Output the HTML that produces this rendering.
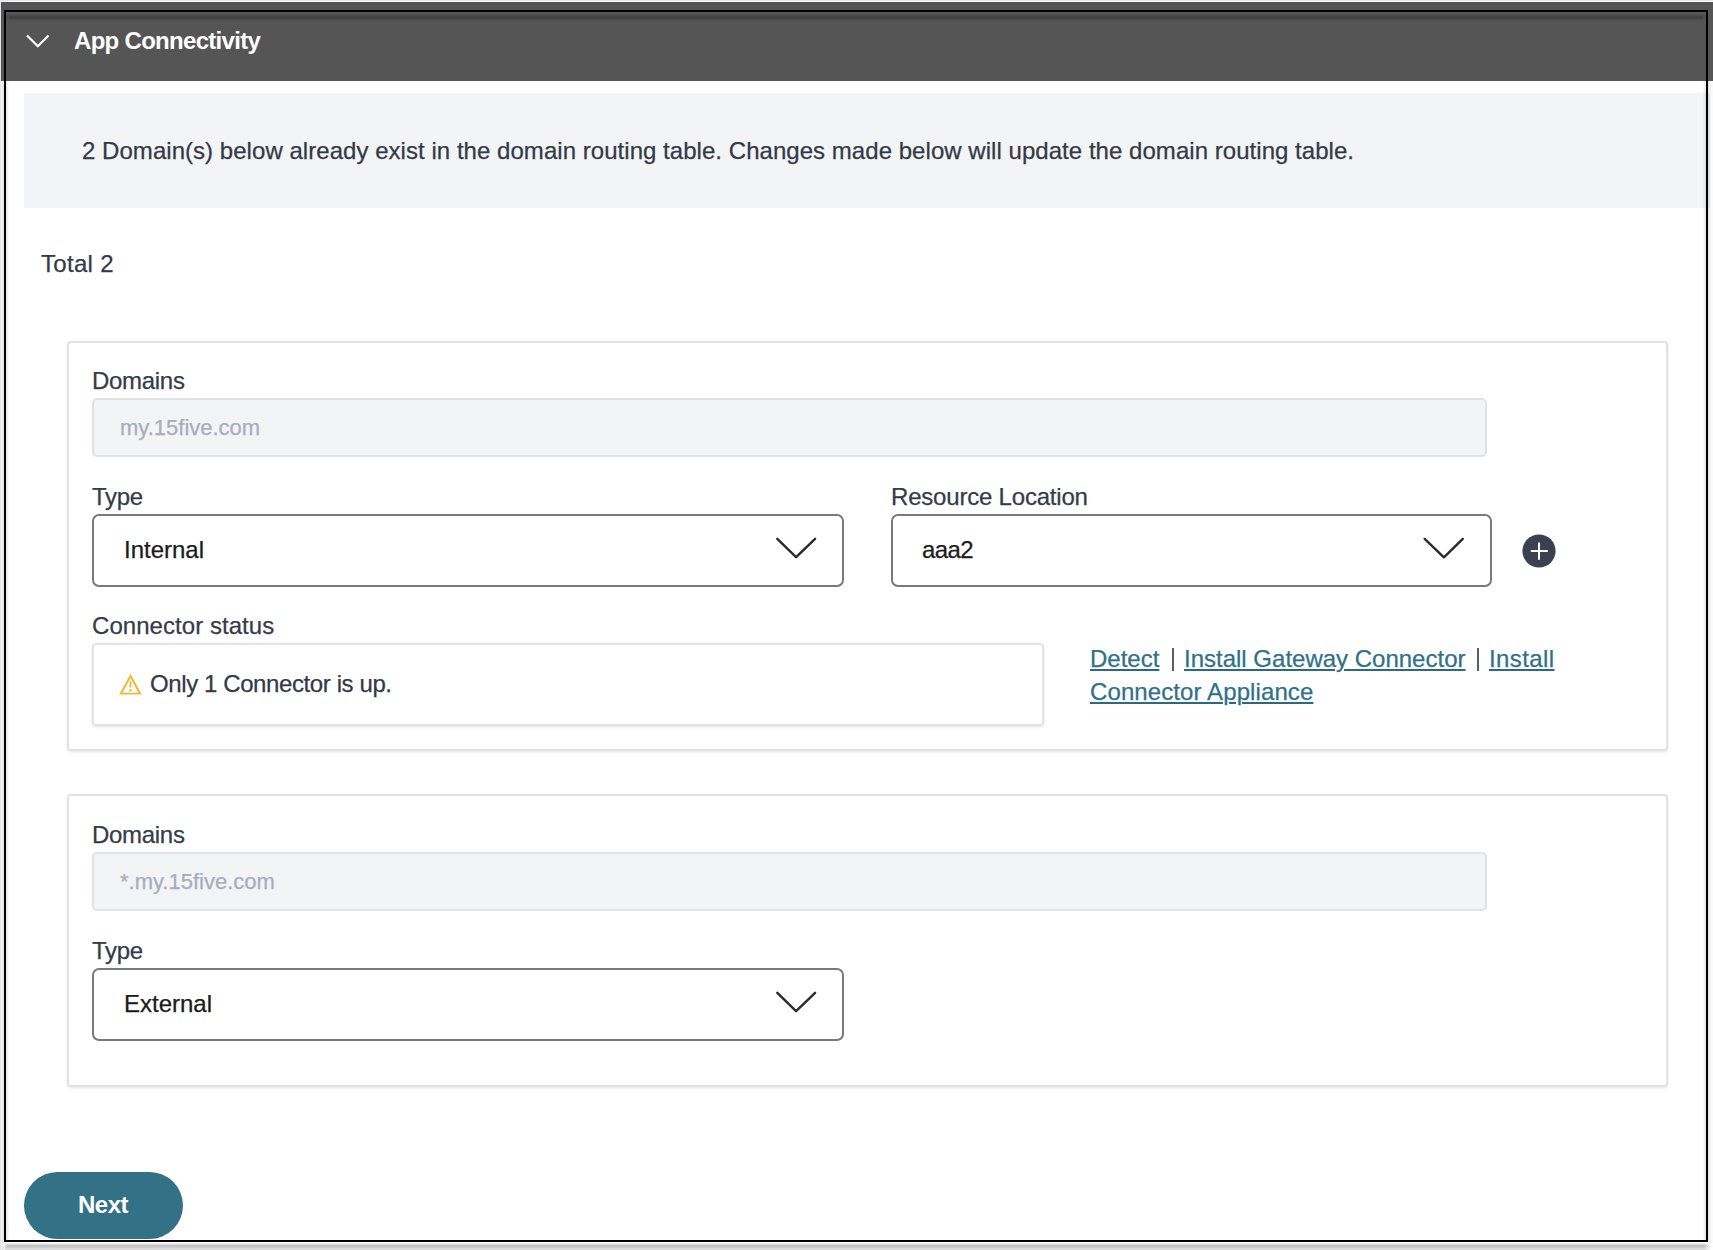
<!DOCTYPE html>
<html>
<head>
<meta charset="utf-8">
<style>
html,body{margin:0;padding:0;}
body{width:1713px;height:1250px;overflow:hidden;position:relative;background:#ffffff;font-family:"Liberation Sans",sans-serif;}
.abs{position:absolute;}
.t{position:absolute;white-space:nowrap;line-height:24px;font-size:24px;-webkit-text-stroke:0.25px currentColor;}
#header{left:1px;top:2px;width:1712px;height:79px;background:#555555;}
#frame{left:4px;top:10px;width:1700px;height:1228px;border:2px solid #000;}
#infobox{left:24px;top:93px;width:1686px;height:115px;background:#f3f4f6;}
.card{position:absolute;left:67px;width:1597px;border:2px solid #e1e2e4;border-radius:4px;background:#fff;box-shadow:0 1px 3px rgba(0,0,0,0.10);}
.inp{position:absolute;left:92px;width:1391px;height:55px;background:#f3f4f6;border:2px solid #e0e2e6;border-radius:5px;}
.sel{position:absolute;height:69px;border:2px solid #797979;border-radius:7px;background:#fff;}
.lbl{color:#343c49;letter-spacing:-0.3px;}
.ph{color:#a7aebb;font-size:22px;line-height:22px;}
.val{color:#1b1b1b;}
.dark{color:#323a47;}
.lnk{color:#2f7187;text-decoration:underline;text-decoration-color:#2a6a80;text-decoration-thickness:2px;text-underline-offset:2px;}
.pipe{position:absolute;width:2px;height:23px;background:#595e6a;top:648px;}
</style>
</head>
<body>
<div class="abs" style="left:0;top:0;width:1713px;height:1px;background:#e4e6ea;"></div>
<div class="abs" style="left:0;top:1px;width:1713px;height:1px;background:#f8f9fc;"></div>
<div id="header" class="abs"></div>
<div class="abs" style="left:0;top:2px;width:1px;height:1248px;background:#e2e4e8;"></div>

<!-- header chevron -->
<svg class="abs" style="left:20px;top:28px" width="40" height="30" viewBox="0 0 40 30">
  <polyline points="7,7.5 17.8,18.2 28.6,7.5" fill="none" stroke="#fff" stroke-width="2.2"/>
</svg>
<div class="t" style="left:74px;top:29px;font-weight:bold;color:#fff;letter-spacing:-0.7px;-webkit-text-stroke:0;">App Connectivity</div>

<div id="infobox" class="abs"></div>
<div class="t dark" style="left:82px;top:139px;letter-spacing:0.04px;">2 Domain(s) below already exist in the domain routing table. Changes made below will update the domain routing table.</div>

<div class="t dark" style="left:41px;top:252px;letter-spacing:0.3px;">Total 2</div>

<!-- card 1 -->
<div class="card" style="top:341px;height:406px;"></div>
<div class="t lbl" style="left:92px;top:369px;">Domains</div>
<div class="inp" style="top:398px;"></div>
<div class="t ph" style="left:120px;top:417px;">my.15five.com</div>

<div class="t lbl" style="left:92px;top:485px;">Type</div>
<div class="sel" style="left:92px;top:514px;width:748px;"></div>
<div class="t val" style="left:124px;top:538px;">Internal</div>
<svg class="abs" style="left:770px;top:530px" width="52" height="36" viewBox="0 0 52 36">
  <polyline points="7.3,8.8 26.1,27.2 45.1,8.8" fill="none" stroke="#2b2b2b" stroke-width="2.4" stroke-linecap="round" stroke-linejoin="round"/>
</svg>

<div class="t lbl" style="left:891px;top:485px;letter-spacing:-0.2px;">Resource Location</div>
<div class="sel" style="left:891px;top:514px;width:597px;"></div>
<div class="t val" style="left:922px;top:538px;letter-spacing:-0.6px;">aaa2</div>
<svg class="abs" style="left:1418px;top:530px" width="52" height="36" viewBox="0 0 52 36">
  <polyline points="6.7,8.9 25.9,27.3 44.8,8.9" fill="none" stroke="#2b2b2b" stroke-width="2.4" stroke-linecap="round" stroke-linejoin="round"/>
</svg>
<svg class="abs" style="left:1522px;top:534px" width="34" height="34" viewBox="0 0 34 34">
  <circle cx="17" cy="17" r="16.6" fill="#3b4150"/>
  <line x1="8.8" y1="17" x2="25.8" y2="17" stroke="#fff" stroke-width="2"/>
  <line x1="17" y1="8.6" x2="17" y2="25.8" stroke="#fff" stroke-width="2"/>
</svg>

<div class="t lbl" style="left:92px;top:614px;letter-spacing:0.05px;">Connector status</div>
<div class="abs" style="left:92px;top:643px;width:948px;height:79px;border:2px solid #e2e3e5;border-radius:4px;box-shadow:0 1px 3px rgba(0,0,0,0.12);"></div>
<svg class="abs" style="left:110px;top:665px" width="40" height="35" viewBox="0 0 40 35">
  <path d="M20.5,8.7 L9.2,29.4 L31.8,29.4 Z M20.5,12.9 L12.6,27.7 L28.3,27.7 Z" fill="#f1bb37" fill-rule="evenodd"/>
  <rect x="19.5" y="16.2" width="2" height="6.4" rx="0.8" fill="#f1bb37"/>
  <circle cx="20.5" cy="25.3" r="1.25" fill="#f1bb37"/>
</svg>
<div class="t dark" style="left:150px;top:672px;letter-spacing:-0.4px;">Only 1 Connector is up.</div>

<div class="t" style="left:1090px;top:647px;"><span class="lnk">Detect</span></div>
<div class="pipe" style="left:1172px;"></div>
<div class="t" style="left:1184px;top:647px;"><span class="lnk">Install Gateway Connector</span></div>
<div class="pipe" style="left:1477px;"></div>
<div class="t" style="left:1489px;top:647px;letter-spacing:0.4px;"><span class="lnk">Install</span></div>
<div class="t" style="left:1090px;top:680px;letter-spacing:0.1px;"><span class="lnk">Connector Appliance</span></div>

<!-- card 2 -->
<div class="card" style="top:794px;height:289px;"></div>
<div class="t lbl" style="left:92px;top:823px;">Domains</div>
<div class="inp" style="top:852px;"></div>
<div class="t ph" style="left:120px;top:871px;">*.my.15five.com</div>

<div class="t lbl" style="left:92px;top:939px;">Type</div>
<div class="sel" style="left:92px;top:968px;width:748px;"></div>
<div class="t val" style="left:124px;top:992px;">External</div>
<svg class="abs" style="left:770px;top:984px" width="52" height="36" viewBox="0 0 52 36">
  <polyline points="7.3,8.8 26.1,27.2 45.1,8.8" fill="none" stroke="#2b2b2b" stroke-width="2.4" stroke-linecap="round" stroke-linejoin="round"/>
</svg>

<!-- next button -->
<div class="abs" style="left:24px;top:1172px;width:159px;height:67px;border-radius:34px;background:#327186;"></div>
<div class="t" style="left:78px;top:1193px;font-weight:bold;color:#fff;letter-spacing:-0.5px;-webkit-text-stroke:0;">Next</div>

<!-- frame shadows -->
<div class="abs" style="left:6px;top:12px;width:1700px;height:10px;-webkit-mask-image:linear-gradient(to right,transparent 0,#000 4px,#000 1696px,transparent 1700px);background:linear-gradient(to bottom,#5a5a5a 0.5px,#555 1.5px,#505050 2.5px,#4a4a4a 3.5px,#444 4.5px,#424242 5.5px,#444 6.5px,#4b4b4b 7.5px,#515151 8.5px,#555 9.5px);"></div>
<div class="abs" style="left:1px;top:81px;width:1px;height:1169px;background:#f3f3f5;"></div>
<div class="abs" style="left:2px;top:81px;width:2px;height:1162px;background:rgba(0,0,0,0.09);"></div>
<div class="abs" style="left:6px;top:81px;width:4px;height:1159px;background:linear-gradient(to right,rgba(0,0,0,0.105),rgba(0,0,0,0.07) 25%,rgba(0,0,0,0.04) 50%,rgba(0,0,0,0.015) 75%,rgba(0,0,0,0));"></div>
<div class="abs" style="left:1702px;top:81px;width:4px;height:1159px;background:linear-gradient(to left,rgba(0,0,0,0.105),rgba(0,0,0,0.07) 25%,rgba(0,0,0,0.04) 50%,rgba(0,0,0,0.015) 75%,rgba(0,0,0,0));"></div>
<div class="abs" style="left:1708px;top:81px;width:1px;height:1162px;background:rgba(0,0,0,0.105);"></div>
<div class="abs" style="left:1709px;top:81px;width:2px;height:1162px;background:rgba(0,0,0,0.05);"></div>
<div class="abs" style="left:1711px;top:81px;width:2px;height:1162px;background:rgba(0,0,0,0.02);"></div>
<div class="abs" style="left:5px;top:1242px;width:1706px;height:8px;-webkit-mask-image:linear-gradient(to right,#000 0,#000 1699px,transparent 1706px);background:linear-gradient(to bottom,#ffffff 0px,#ffffff 1px,#eeeeee 1px,#eeeeee 2px,#d6d6d6 2px,#d6d6d6 3px,#c6c6c6 3px,#c3c3c3 5px,#c6c6c6 5px,#d2d2d2 6px,#e0e0e0 8px);"></div>
<div class="abs" style="left:2px;top:1242px;width:6px;height:8px;background:linear-gradient(to right,#e7e7e7,rgba(231,231,231,0));"></div>
<div id="frame" class="abs"></div>
</body>
</html>
